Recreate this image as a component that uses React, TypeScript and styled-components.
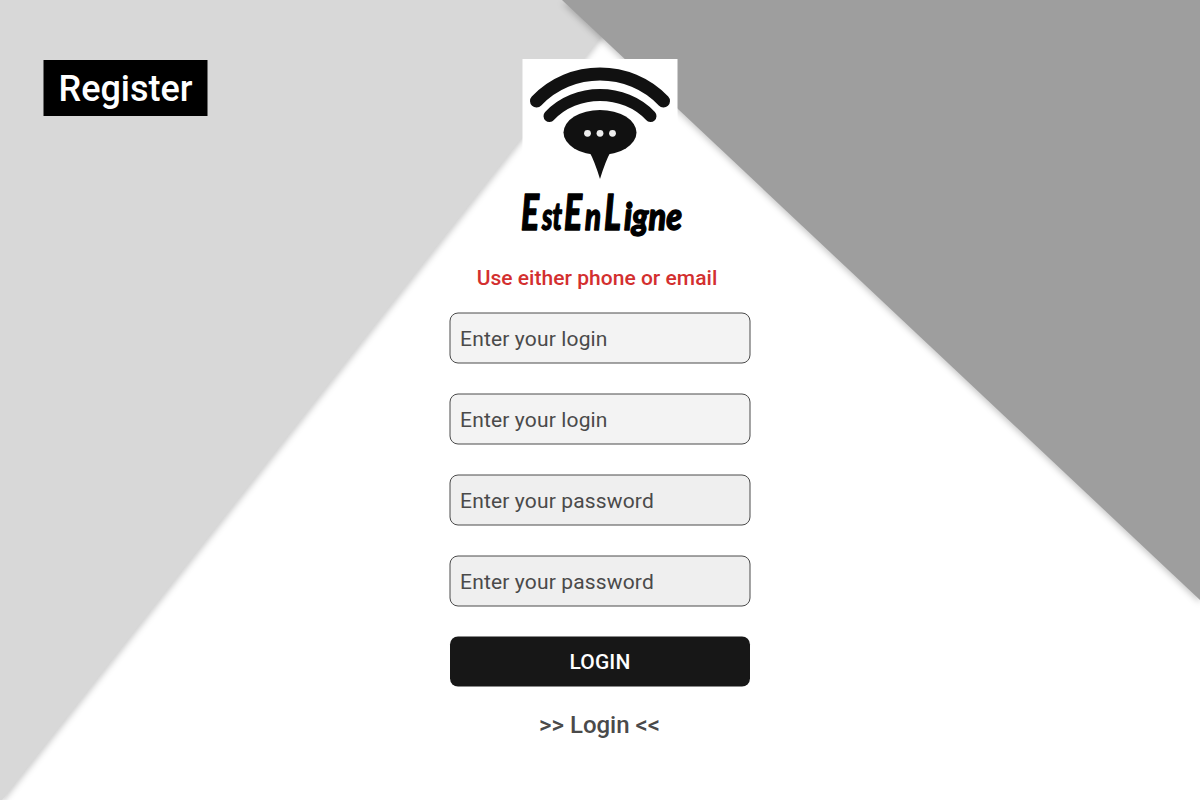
import React from 'react';
import styled, { createGlobalStyle } from 'styled-components';

const GlobalStyle = createGlobalStyle`
  * { box-sizing: border-box; }
  body { margin: 0; font-family: Roboto, sans-serif; background: #fff; }
`;

const Page = styled.main`
  position: relative;
  display: grid;
  grid-template-columns: 1fr 302px 1fr;
  align-items: start;
  width: 1200px;
  height: 800px;
  overflow: hidden;
  isolation: isolate;
`;

const Shade = styled.div<{ $depth: number }>`
  position: absolute;
  inset: 0;
  z-index: ${(p) => p.$depth};
  filter: drop-shadow(0 3px 3px rgba(0, 0, 0, 0.22));
`;

const Facet = styled.div<{ $shape: string; $color: string }>`
  height: 100%;
  background: ${(p) => p.$color};
  clip-path: polygon(${(p) => p.$shape});
`;

const Heading = styled.h1`
  justify-self: start;
  margin: 60px 0 0 43px;
  padding-top: 1px;
  width: 164px;
  height: 56px;
  background: #000;
  color: #fff;
  font-size: 36px;
  font-weight: 500;
  line-height: 56px;
  text-align: center;
  transform: translateX(0.5px);
`;

const Panel = styled.form`
  grid-column: 2;
  display: flex;
  flex-direction: column;
  align-items: center;
  padding-top: 59px;
`;

const Emblem = styled.svg`
  display: block;
  align-self: flex-start;
  margin-left: 73px;
  width: 155px;
  height: 124px;
  background: #fff;
  transform: translateX(0.5px);
`;

const Wordmark = styled.svg`
  display: block;
  width: 180px;
  height: 62px;
  overflow: visible;
  font-family: Lato, sans-serif;
  font-style: italic;
  font-weight: 900;
`;

const Hint = styled.p`
  margin: 17px 6px 0 0;
  height: 32px;
  color: #d32f2f;
  font-size: 21px;
  font-weight: 500;
  line-height: 32px;
  letter-spacing: 0.03px;
`;

const Fields = styled.div`
  display: flex;
  flex-direction: column;
  gap: 30px;
  width: 100%;
  margin-top: 18px;
`;

const Field = styled.input<{ $fill: string }>`
  width: 301px;
  height: 51px;
  padding: 1px 9.6px 0;
  border: 1px solid #4a4a4a;
  border-radius: 8.5px;
  background: ${(p) => p.$fill};
  font: 400 21px Roboto, sans-serif;
  letter-spacing: 0.15px;
  outline: none;
  transform: translate(0.5px, 0.5px);
  &::placeholder { color: #4a4a4a; opacity: 1; }
`;

const Submit = styled.button`
  width: 300px;
  height: 50px;
  margin-top: 30px;
  padding: 0;
  border: 0;
  border-radius: 8px;
  background: #171717;
  color: #fff;
  font: 500 21px/48px Roboto, sans-serif;
  letter-spacing: 0.1px;
  transform: translateY(0.5px);
`;

const SwitchLink = styled.a`
  margin-top: 23px;
  padding-right: 1px;
  color: #4a4a4a;
  font-size: 24px;
  font-weight: 500;
  line-height: 32px;
`;

const Logo = () => (
  <Emblem viewBox="0 0 155 124" aria-hidden="true">
    <g fill="none" stroke="#111" strokeWidth="13" strokeLinecap="round" style={{ filter: 'blur(0.6px)' }}>
      <path d="M14 42 C48 6 107 6 141 42" />
      <path d="M27 57 C53 29 102 29 128 57" strokeWidth="12" />
    </g>
    <g fill="#111" style={{ filter: 'blur(0.6px)' }}>
      <ellipse cx="77.5" cy="73.5" rx="36.5" ry="22.5" />
      <path d="M66.5 92 Q72 102 77.5 120 Q83 102 88.5 92Z" />
    </g>
    <g fill="#eee" style={{ filter: 'blur(0.5px)' }}>
      <circle cx="65" cy="74.3" r="3.4" />
      <circle cx="77.5" cy="74.3" r="3.4" />
      <circle cx="90" cy="74.3" r="3.4" />
    </g>
  </Emblem>
);

const wordParts = [
  { text: 'E', x: 11, width: 18, size: 49 },
  { text: 'st', x: 32, width: 20, size: 37 },
  { text: 'E', x: 54, width: 18, size: 49 },
  { text: 'n', x: 75, width: 16, size: 37 },
  { text: 'L', x: 94, width: 17, size: 49 },
  { text: 'igne', x: 114, width: 58, size: 37 },
];

const Brand = () => (
  <Wordmark viewBox="0 0 180 62">
    <text y="46.5" stroke="#000" strokeWidth="1.4" strokeLinejoin="round">
      {wordParts.map((p) => (
        <tspan key={p.x} x={p.x} fontSize={p.size} textLength={p.width} lengthAdjust="spacingAndGlyphs">
          {p.text}
        </tspan>
      ))}
    </text>
  </Wordmark>
);

const fields = [
  { label: 'Enter your login', fill: '#f3f3f3' },
  { label: 'Enter your login', fill: '#f3f3f3' },
  { label: 'Enter your password', fill: '#efefef' },
  { label: 'Enter your password', fill: '#efefef' },
];

export default function App() {
  return (
    <>
      <GlobalStyle />
      <Page>
        <Shade $depth={-2}>
          <Facet $color="#d8d8d8" $shape="0 0, 630px 0, 2px 800px, 0 800px" />
        </Shade>
        <Shade $depth={-1}>
          <Facet $color="#9e9e9e" $shape="562px 0, 1200px 0, 1200px 600px" />
        </Shade>
        <Heading>Register</Heading>
        <Panel onSubmit={(e) => e.preventDefault()}>
          <Logo />
          <Brand />
          <Hint>Use either phone or email</Hint>
          <Fields>
            {fields.map((f, i) => (
              <Field key={i} $fill={f.fill} placeholder={f.label} />
            ))}
          </Fields>
          <Submit>LOGIN</Submit>
          <SwitchLink>&gt;&gt; Login &lt;&lt;</SwitchLink>
        </Panel>
      </Page>
    </>
  );
}
